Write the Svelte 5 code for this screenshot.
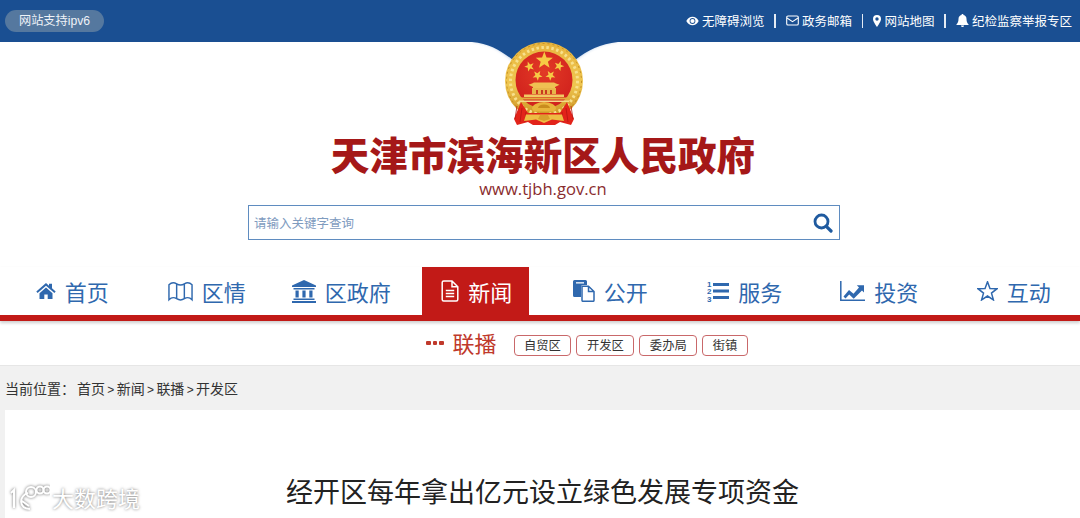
<script>
  const links = [
    { icon: 'eye', label: '无障碍浏览' },
    { icon: 'mail', label: '政务邮箱' },
    { icon: 'pin', label: '网站地图' },
    { icon: 'bell', label: '纪检监察举报专区' }
  ];
  const nav = [
    { icon: 'home', label: '首页' },
    { icon: 'map', label: '区情' },
    { icon: 'bank', label: '区政府' },
    { icon: 'file', label: '新闻', active: true },
    { icon: 'copy', label: '公开' },
    { icon: 'list', label: '服务' },
    { icon: 'chart', label: '投资' },
    { icon: 'star', label: '互动' }
  ];
  const tags = ['自贸区', '开发区', '委办局', '街镇'];
  const crumbs = ['首页', '新闻', '联播', '开发区'];
  const smallStars = [[529.5, 66.5, -20], [559, 66, 20], [537.5, 75.5, -40], [550.5, 75.5, 40]];
  function star(cx, cy, r, rot = 0) {
    const p = [];
    for (let i = 0; i < 10; i++) {
      const rad = i % 2 ? r * 0.42 : r;
      const a = ((-90 + rot + i * 36) * Math.PI) / 180;
      p.push((cx + rad * Math.cos(a)).toFixed(2) + ',' + (cy + rad * Math.sin(a)).toFixed(2));
    }
    return p.join(' ');
  }
</script>

{#snippet icon(name)}
  {#if name === 'eye'}
    <svg class="ti" width="13" height="10" viewBox="0 0 13 10"><path fill="#fff" d="M.3 5C2 2 4 .8 6.5.8S11 2 12.7 5C11 8 9 9.2 6.5 9.2S2 8 .3 5z"/><circle cx="6.5" cy="5" r="2.9" fill="#1a4f92"/><circle cx="6.5" cy="5" r="2.1" fill="#fff"/></svg>
  {:else if name === 'mail'}
    <svg class="ti" width="13" height="11" viewBox="0 0 13 11"><rect x=".7" y="1" width="11.6" height="9" rx="1.3" fill="none" stroke="#fff" stroke-width="1.1"/><path d="M1 3l5.5 3.6L12 3" fill="none" stroke="#fff" stroke-width="1.1"/></svg>
  {:else if name === 'pin'}
    <svg class="ti" width="8" height="12" viewBox="0 0 8 12"><path fill="#fff" fill-rule="evenodd" d="M4 0a4 4 0 0 1 4 4c0 2.300-2.600 6-4 8C2.600 10 0 6.300 0 4a4 4 0 0 1 4-4zm0 2.300a1.700 1.700 0 1 0 0 3.400 1.700 1.700 0 0 0 0-3.400z"/></svg>
  {:else if name === 'bell'}
    <svg class="ti" width="13" height="13" viewBox="0 0 13 13"><path fill="#fff" d="M6.500 0c.6 0 1 .4 1 1 2 .4 3 2 3 4 0 3 .9 4.200 2 5.300V11H.5v-.7C1.600 9.200 2.500 8 2.500 5c0-2 1-3.600 3-4 0-.6.4-1 1-1zM5 11.500h3a1.500 1.500 0 0 1-3 0z"/></svg>
  {:else if name === 'home'}
    <svg width="20" height="18" viewBox="0 0 20 18"><path d="M10 1 .3 9.500l1.300 1.500L10 3.700l8.400 7.300 1.300-1.500L16 6.300V1.800h-3v1.900z"/><path d="M3.500 11.200V17h4.800v-4.500h3.400V17h4.800v-5.800L10 5.500z"/></svg>
  {:else if name === 'map'}
    <svg width="25" height="22" viewBox="0 0 26 22"><path class="ln" d="M1 4.500C3.500 2 6.500 2 9 3.500c3 2 5 2 8 0 2.500-1.500 5.500-1.500 8 1V20c-2.500-2.500-5.500-2.500-8-1-3 2-5 2-8 0-2.500-1.500-5.500-1.500-8 1zM9 3.500V19M17 3.500V19"/></svg>
  {:else if name === 'bank'}
    <svg width="24" height="23" viewBox="0 0 24 23"><path d="M12 0 0 5.500V7h24V5.500zM1.500 8h21v1.500h-21zM3.500 10.500h3.200v7H3.500zM10.400 10.500h3.200v7h-3.200zM17.300 10.500h3.200v7h-3.200zM1.500 18.500h21V20h-21zM0 21h24v2H0z"/></svg>
  {:else if name === 'file'}
    <svg width="18" height="22" viewBox="0 0 18 22"><path class="ln w" d="M1.200 2.500q0-1.500 1.500-1.500H11l5.800 5.800v12.700q0 1.500-1.500 1.500H2.700q-1.500 0-1.500-1.500zM11 1v5.800h5.800M4.800 10.500h8.400M4.800 13.500h8.400M4.800 16.500h8.400"/></svg>
  {:else if name === 'copy'}
    <svg width="22" height="22" viewBox="0 0 22 22"><path d="M1.500 0h11q1.500 0 1.500 1.500V5H9.500Q8 5 8 6.500V17H1.500Q0 17 0 15.500v-14Q0 0 1.500 0z"/><path fill="#fff" d="M3 2.200h8v1.300H3z"/><path class="ln" d="M9 6.200h6.500l5.500 5.300v8.800q0 1-1 1H10q-1 0-1-1zM15.500 6.200v5.300H21"/></svg>
  {:else if name === 'list'}
    <svg width="22" height="22" viewBox="0 0 22 22"><path d="M6 3h16v3H6zM6 9.500h16v3H6zM6 16h16v3H6z"/><text x="0" y="6.500" class="num">1</text><text x="0" y="14" class="num">2</text><text x="0" y="21.500" class="num">3</text></svg>
  {:else if name === 'chart'}
    <svg width="25" height="20" viewBox="0 0 25 20"><path class="ln" d="M.8 0v19.200H25"/><path d="M3.500 15.500 9 9l4.500 3.800L19 6.500l-2.200-2.200H24v7.200l-2-2-8.300 8.200L9.200 13.500l-3.700 4z"/></svg>
  {:else if name === 'star'}
    <svg width="21" height="20" viewBox="0 0 21 20"><polygon class="ln" points={star(10.5, 10.8, 10, 0)}/></svg>
  {/if}
{/snippet}

<div class="page">
  <div class="topbar">
    <span class="pill">网站支持ipv6</span>
    <div class="links">
      {#each links as l, i}
        {#if i}<i class="sep"></i>{/if}
        <a class="link">{@render icon(l.icon)}{l.label}</a>
      {/each}
    </div>
  </div>

  <header class="hero">
    <svg class="emblem" width="180" height="88" viewBox="453 42 180 88">
      <defs>
        <linearGradient id="gold" x1="0" y1="0" x2="0" y2="1">
          <stop offset="0" stop-color="#e8b53f"/>
          <stop offset=".55" stop-color="#efc650"/>
          <stop offset="1" stop-color="#c98c1e"/>
        </linearGradient>
        <radialGradient id="redfill" cx=".5" cy=".35" r=".7">
          <stop offset="0" stop-color="#e23a26"/>
          <stop offset="1" stop-color="#cf1f1c"/>
        </radialGradient>
        <filter id="soft" x="-10%" y="-30%" width="120%" height="160%"><feGaussianBlur stdDeviation="1.6"/></filter>
      </defs>
      <path d="M468 41C490 43 500 50 513 61L575 61C588 50 600 43 622 41Z" fill="#8fb0d8" filter="url(#soft)" opacity=".6"/>
      <path d="M472 42C490 44 500 50 513 60L575 60C588 50 600 44 618 42Z" fill="#1a4f92"/>
      <circle cx="544" cy="81" r="39" fill="url(#gold)"/>
      <circle cx="544" cy="81" r="37.500" fill="none" stroke="#b9831c" stroke-width="1" stroke-dasharray="2 3" opacity=".8"/>
      <circle cx="544" cy="81" r="33.500" fill="none" stroke="#f8e08c" stroke-width="3" stroke-dasharray="2.500 2.500"/>
      <circle cx="544" cy="80" r="28.500" fill="url(#redfill)"/>
      <polygon points={star(544.3, 60.5, 9)} fill="#f6ca45"/>
      {#each smallStars as s}
        <polygon points={star(s[0], s[1], 5.2, s[2])} fill="#f6ca45"/>
      {/each}
      <path d="M533 88V87L528.500 84.800 532 83.500 534 82.500H554L556 83.500 559.500 84.800 555 87V88Z" fill="#efc052"/>
      <path d="M532 88H556V94H532Z" fill="#e8b64a"/>
      <path d="M536 90H538V94H536ZM541 90H543V94H541ZM545 90H547V94H545ZM550 90H552V94H550Z" fill="#c83a20"/>
      <path d="M524 94.500H564V97H524Z" fill="#f1c964"/>
      <path d="M520 97.500H568V99.500H520Z" fill="#e3ad3e"/>
      <path d="M519 100.500H569V102H519Z" fill="#f4d98a"/>
      <path d="M521 102L514 119 517 125 528 122 533 125 555 125 560 122 571 125 574 119 567 102 560 113 528 113Z" fill="#e2231a"/>
      <path d="M517 106 515 119M522 108 520 122M526 112 525 122M571 106 573 119M566 108 568 122M562 112 563 122" stroke="#b81512" stroke-width=".8" fill="none"/>
      <path d="M532 109a12 7 0 0 1 24 0l-2 2.500h-20z" fill="#e8b53c"/>
      <path d="M538 108a6 3.500 0 0 1 12 0z" fill="#c98c1e"/>
      <path d="M526 114.500H562L564 121 552 119.500 544 123 536 119.500 524 121Z" fill="#eebd44"/>
      <path d="M540 115H548L550 119 544 121 538 119Z" fill="#d99f2c"/>
    </svg>
    <h1 class="title">天津市滨海新区人民政府</h1>
    <div class="url">www.tjbh.gov.cn</div>
    <div class="search">
      <span class="ph">请输入关键字查询</span>
      <svg width="20" height="20" viewBox="0 0 20 20"><circle cx="8.500" cy="8.500" r="6.500" fill="none" stroke="#1f5a9f" stroke-width="2.800"/><path d="M13.300 13.300 18 18" stroke="#1f5a9f" stroke-width="3.200" stroke-linecap="round"/></svg>
    </div>
  </header>

  <nav class="nav">
    {#each nav as n}
      <a class="item" class:active={n.active}>
        {@render icon(n.icon)}
        <span>{n.label}</span>
      </a>
    {/each}
  </nav>

  <div class="sub">
    <span class="dots"><i></i><i></i><i></i></span>
    <span class="subname">联播</span>
    <div class="tags">
      {#each tags as t}<a class="tag">{t}</a>{/each}
    </div>
  </div>

  <div class="crumb">
    当前位置：<span class="trail">{#each crumbs as c, i}{#if i}<b>&gt;</b>{/if}{c}{/each}</span>
  </div>

  <main class="card">
    <h2 class="headline">经开区每年拿出亿元设立绿色发展专项资金</h2>
  </main>

  <div class="mark">
    <svg width="42" height="30" viewBox="0 0 42 30"><g class="logo"><path d="M3 11 6 8V26M20 11C11 14 10 26 22 27M14 19 21 24"/><circle cx="23" cy="10" r="5"/><circle cx="32" cy="8" r="3.500"/><circle cx="39" cy="8" r="3.500"/></g></svg>
    <span>大数跨境</span>
  </div>
</div>

<style>
  :global(body) { margin: 0; background: #f1f1f1; }
  .page {
    position: relative;
    height: 518px;
    overflow: hidden;
    font-family: "Liberation Sans", "Noto Sans CJK SC", sans-serif;
    background: #f1f1f1;
  }
  .topbar {
    height: 42px;
    box-sizing: border-box;
    background: #1a4f92;
    display: flex;
    align-items: center;
    justify-content: space-between;
    padding: 0 8px 0 5px;
    color: #fff;
  }
  .pill {
    width: 99px;
    height: 22px;
    box-sizing: border-box;
    padding-left: 14px;
    line-height: 23px;
    border-radius: 11px;
    background: #55789f;
    font-size: 12.200px;
    color: #eef2f7;
  }
  .links { display: flex; align-items: center; font-size: 12.500px; margin-bottom: 1px; }
  .link { display: flex; align-items: center; gap: 3px; white-space: nowrap; }
  .ti { flex: none; }
  .sep { width: 1.500px; height: 14px; margin: 0 10px; background: #e4ebf4; }
  .hero {
    background: #fff;
    height: 225px;
    display: flex;
    flex-direction: column;
    align-items: center;
    padding-left: 6px;
  }
  .emblem { display: block; flex: none; }
  .title {
    margin: 0;
    margin-top: -2px;
    height: 48px;
    line-height: 50px;
    font-family: "Noto Sans CJK SC", sans-serif;
    font-size: 38.600px;
    font-weight: 900;
    color: #a51818;
    white-space: nowrap;
  }
  .url {
    height: 25px;
    line-height: 25px;
    font-family: "Open Sans", sans-serif;
    font-size: 16.600px;
    color: #8a2c2e;
  }
  .search {
    width: 592px;
    height: 35px;
    box-sizing: border-box;
    border: 1px solid #5f8cc0;
    background: #fff;
    display: flex;
    align-items: center;
    justify-content: space-between;
    padding: 0 6px 0 5px;
    margin: 4px 0 0 2px;
  }
  .ph { font-size: 12.500px; color: #7f9cbf; }
  .nav {
    display: grid;
    grid-template-columns: repeat(8, 134.500px);
    padding-left: 5px;
    height: 48px;
    background: #fff;
    border-bottom: 6px solid #c21a17;
    box-shadow: 0 2px 3px rgba(0, 0, 0, .2);
    position: relative;
  }
  .item {
    justify-self: center;
    display: flex;
    align-items: center;
    gap: 9px;
    font-size: 22px;
    color: #2f68ae;
    fill: #2f68ae;
    white-space: nowrap;
    height: 54px;
    box-sizing: border-box;
    padding-bottom: 6px;
  }
  .item.active {
    width: 107px;
    justify-content: center;
    padding-left: 2px;
    background: #c21a17;
    color: #fff;
    fill: #fff;
  }
  .ln { fill: none; stroke: #2f68ae; stroke-width: 1.500; }
  .ln.w { stroke: #fff; }
  .num { font-size: 8px; font-weight: 700; font-family: "Liberation Sans", sans-serif; }
  .sub {
    height: 45px;
    box-sizing: border-box;
    background: #fff;
    border-bottom: 1px solid #e6e6e6;
    display: flex;
    align-items: center;
    padding: 4px 0 0 426px;
    color: #c0392b;
  }
  .dots { display: flex; gap: 2px; margin: 0 9px 4px 0; }
  .dots i { width: 4.500px; height: 4.500px; background: #c0392b; border-radius: 1px; }
  .subname { font-size: 22px; margin: 0 17px 6px 0; }
  .tags { display: flex; gap: 5px; }
  .tag {
    height: 21px;
    line-height: 20px;
    box-sizing: border-box;
    padding: 0 9.500px;
    border: 1px solid #c9686a;
    border-radius: 4px;
    font-size: 12.300px;
    color: #333;
  }
  .crumb {
    height: 44px;
    box-sizing: border-box;
    padding: 13px 0 0 5px;
    font-size: 14px;
    line-height: 20px;
    color: #333;
  }
  .trail { margin-left: 2px; }
  .trail b { display: inline-block; width: 11.700px; text-align: center; font-weight: 400; font-size: 12px; }
  .card {
    margin-left: 5px;
    height: 108px;
    background: #fff;
    padding-top: 63px;
    box-sizing: border-box;
  }
  .headline {
    margin: 0;
    text-align: center;
    font-family: "Noto Sans CJK SC", sans-serif;
    font-weight: 400;
    font-size: 27px;
    line-height: 36px;
    color: #222;
  }
  .mark {
    position: absolute;
    left: 8px;
    bottom: 5px;
    display: flex;
    align-items: center;
    gap: 2px;
    color: #fff;
    font-size: 22px;
    font-family: "Noto Sans CJK SC", sans-serif;
    text-shadow: 0 0 3px rgba(0, 0, 0, .55);
  }
  .logo {
    fill: none;
    stroke: #fff;
    stroke-width: 2;
    filter: drop-shadow(0 0 1.500px rgba(0, 0, 0, .6));
  }
</style>
